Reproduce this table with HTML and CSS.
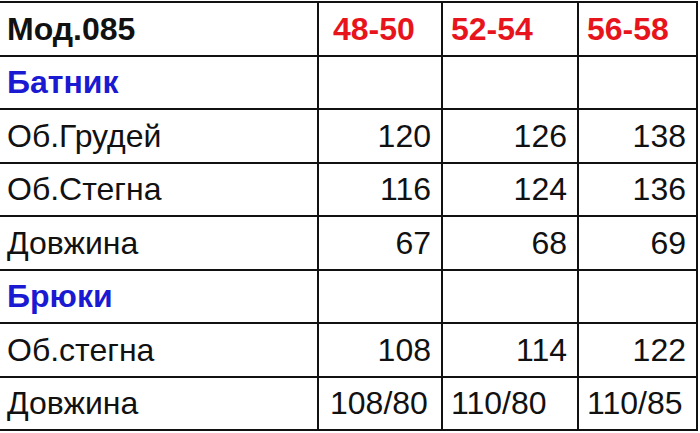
FILE: index.html
```html
<!DOCTYPE html>
<html>
<head>
<meta charset="utf-8">
<link rel="stylesheet" href="styles.css">
</head>
<body>
<table class="sizes">
  <colgroup>
    <col class="c1"><col class="c2"><col class="c3"><col class="c4">
  </colgroup>
  <tr>
    <td class="title">Мод.085</td>
    <td class="size s1">48-50</td>
    <td class="size">52-54</td>
    <td class="size">56-58</td>
  </tr>
  <tr>
    <td class="group">Батник</td><td></td><td></td><td></td>
  </tr>
  <tr>
    <td class="label">Об.Грудей</td><td class="num">120</td><td class="num">126</td><td class="num">138</td>
  </tr>
  <tr>
    <td class="label">Об.Стегна</td><td class="num">116</td><td class="num">124</td><td class="num">136</td>
  </tr>
  <tr>
    <td class="label">Довжина</td><td class="num">67</td><td class="num">68</td><td class="num">69</td>
  </tr>
  <tr>
    <td class="group">Брюки</td><td></td><td></td><td></td>
  </tr>
  <tr>
    <td class="label">Об.стегна</td><td class="num">108</td><td class="num">114</td><td class="num">122</td>
  </tr>
  <tr>
    <td class="label">Довжина</td><td class="txt t1">108/80</td><td class="txt">110/80</td><td class="txt">110/85</td>
  </tr>
</table>
</body>
</html>
```
FILE: styles.css
```css
html, body {
  margin: 0;
  padding: 0;
  background: #ffffff;
}
body {
  font-family: "Liberation Sans", Arial, sans-serif;
  font-size: 32px;
  color: #111111;
}
.sizes {
  border-collapse: collapse;
  table-layout: fixed;
  width: 697px;
  margin-top: 1px;
}
.c1 { width: 318px; }
.c2 { width: 124px; }
.c3 { width: 136px; }
.c4 { width: 119px; }
.sizes td {
  border-top: 2px solid #111;
  border-bottom: 2px solid #111;
  border-right: 2px solid #111;
  height: 51.5px;
  padding: 0 10px 0 8px;
  white-space: nowrap;
  line-height: 1;
  vertical-align: middle;
}
.sizes td:first-child {
  border-left: none;
  padding-left: 7px;
}
.title {
  font-weight: bold;
  color: #111;
}
.size {
  font-weight: bold;
  color: #e8141c;
}
.size.s1 { padding-left: 14px; }
.group {
  font-weight: bold;
  color: #1a1ad2;
}
.num {
  text-align: right;
}
.txt {
  text-align: left;
  padding-left: 9px;
}
.txt.t1 { padding-left: 11px; padding-right: 4px; }
```
